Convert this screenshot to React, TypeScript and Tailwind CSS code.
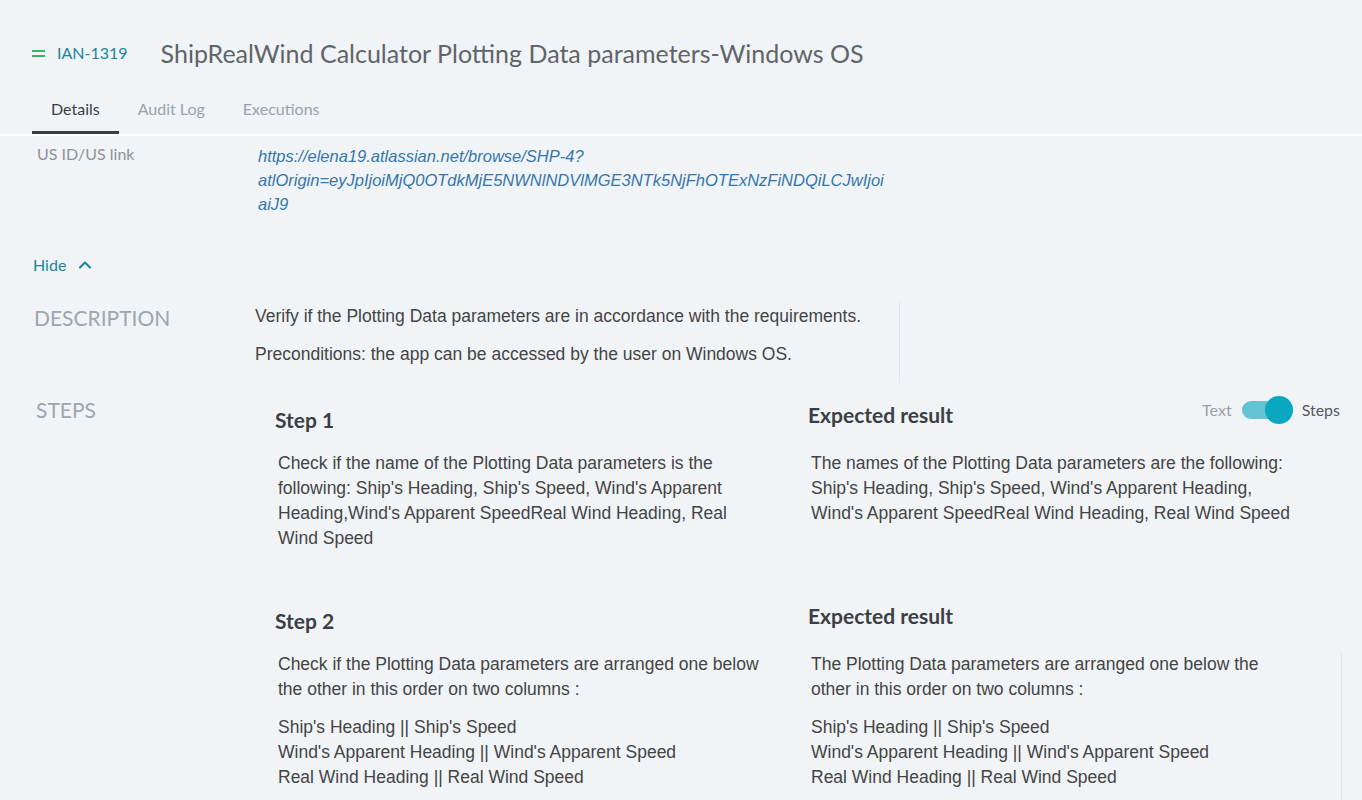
import React from 'react';
import { ChevronUp } from 'lucide-react';

const body = "font-['Liberation_Sans',Arial,sans-serif]";

const steps = [
  {
    title: 'Step 1',
    text: [
      "Check if the name of the Plotting Data parameters is the following: Ship's Heading, Ship's Speed, Wind's Apparent Heading,Wind's Apparent SpeedReal Wind Heading, Real Wind Speed",
    ],
    expected: [
      "The names of the Plotting Data parameters are the following: Ship's Heading, Ship's Speed, Wind's Apparent Heading, Wind's Apparent SpeedReal Wind Heading, Real Wind Speed",
    ],
  },
  {
    title: 'Step 2',
    text: [
      'Check if the Plotting Data parameters are arranged one below the other in this order on two columns :',
      "Ship's Heading || Ship's Speed\nWind's Apparent Heading || Wind's Apparent Speed\nReal Wind Heading || Real Wind Speed",
    ],
    expected: [
      'The Plotting Data parameters are arranged one below the other in this order on two columns :',
      "Ship's Heading || Ship's Speed\nWind's Apparent Heading || Wind's Apparent Speed\nReal Wind Heading || Real Wind Speed",
    ],
  },
];

const Paragraphs = ({ items }: { items: string[] }) => (
  <div className={`${body} flex flex-col gap-[13px] text-[17.5px] leading-[25px] text-[#444]`}>
    {items.map((p, i) => (
      <p key={i} className="whitespace-pre-line">
        {p}
      </p>
    ))}
  </div>
);

const Toggle = () => (
  <div className="flex items-center mt-[-5px] mr-[2px]">
    <span className="text-[16px] text-[#9b9fa4]">Text</span>
    <div className="relative ml-[10px] w-[51px] h-[28px] flex items-center">
      <div className="w-[44px] h-[18px] rounded-full bg-[#62c3d2]" />
      <div className="absolute right-0 top-0 w-[28px] h-[28px] rounded-full bg-[#0aa8c0]" />
    </div>
    <span className="ml-[9px] text-[16px] text-[#555a5f]">Steps</span>
  </div>
);

export default function App() {
  return (
    <div className="min-h-screen bg-[#f1f4f7] font-['Lato',sans-serif] overflow-hidden">
      {/* header */}
      <div className="flex items-center pl-8 pt-[37px] h-[69px]">
        <div className="flex flex-col gap-[3px] w-[13px]">
          <div className="h-[2px] bg-[#3bb56b]" />
          <div className="h-[2px] bg-[#3bb56b]" />
        </div>
        <span className="ml-[12px] text-[16px] text-[#17879a]">IAN-1319</span>
        <h1 className="ml-[33px] text-[25px] leading-[32px] text-[#5f6469]">
          ShipRealWind Calculator Plotting Data parameters-Windows OS
        </h1>
      </div>

      {/* tabs */}
      <div className="mt-[30px] flex pl-8 border-b-2 border-white text-[16px] leading-[20px]">
        <div className="px-[19px] pb-[12px] border-b-[3px] border-[#3a3e43] text-[#3a3e43]">Details</div>
        <div className="px-[19px] pb-[12px] text-[#9ca1a6]">Audit Log</div>
        <div className="px-[19px] pb-[12px] text-[#9ca1a6]">Executions</div>
      </div>

      {/* US link */}
      <div className="flex mt-[8px] pl-[37px]">
        <div className="w-[221px] text-[16px] leading-[20px] text-[#8d9196]">US ID/US link</div>
        <div className={`${body} italic text-[16.5px] leading-[24px] text-[#3576ad]`}>
          <div>https://elena19.atlassian.net/browse/SHP-4?</div>
          <div>atlOrigin=eyJpIjoiMjQ0OTdkMjE5NWNlNDVlMGE3NTk5NjFhOTExNzFiNDQiLCJwIjoi</div>
          <div>aiJ9</div>
        </div>
      </div>

      {/* hide */}
      <div className="mt-[39px] pl-[33px] flex items-center gap-[9px] text-[16px] leading-[20px] text-[#17879a]">
        Hide
        <ChevronUp size={20} strokeWidth={2.5} />
      </div>

      {/* description */}
      <div className="mt-[27px] flex pl-[34px]">
        <div className="w-[221px] mt-[2px] text-[21px] leading-[28px] text-[#a0a5aa]">DESCRIPTION</div>
        <div className="w-[645px] pt-[2px] pb-[16px] border-r border-[#e2e6ea]">
          <Paragraphs
            items={[
              'Verify if the Plotting Data parameters are in accordance with the requirements.',
              'Preconditions: the app can be accessed by the user on Windows OS.',
            ]}
          />
        </div>
      </div>

      {/* steps */}
      <div className="mt-[13px] flex pl-[36px] pr-[20px]">
        <div className="w-[239px] text-[21px] leading-[28px] text-[#a0a5aa]">STEPS</div>
        <div className="flex-1 flex flex-col gap-[46px]">
          {steps.map((s, i) => (
            <div key={s.title} className="grid grid-cols-[533px_1fr]">
              <div>
                <div className="h-[55px] pt-[10px]">
                  <h3 className="text-[21px] leading-[28px] font-bold text-[#3b3e42]">{s.title}</h3>
                </div>
                <div className="pl-[3px] w-[488px]">
                  <Paragraphs items={s.text} />
                </div>
              </div>
              <div>
                <div className="h-[55px] pt-[5px] flex justify-between items-start">
                  <h3 className="text-[21px] leading-[28px] font-bold text-[#3b3e42]">Expected result</h3>
                  {i === 0 && <Toggle />}
                </div>
                <div className={`pl-[3px] pb-[16px] ${i === 1 ? 'border-r border-[#e2e6ea]' : ''}`}>
                  <div className="w-[486px]">
                    <Paragraphs items={s.expected} />
                  </div>
                </div>
              </div>
            </div>
          ))}
        </div>
      </div>
    </div>
  );
}
